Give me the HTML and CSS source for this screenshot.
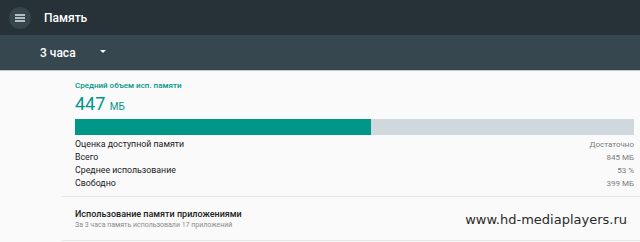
FILE: index.html
```html
<!DOCTYPE html>
<html lang="ru">
<head>
    <meta charset="UTF-8">
    <title>Память</title>
    <link rel="stylesheet" href="styles.css">
</head>
<body>
    <div class="toolbar">
        <div class="menu-btn">
            <svg width="10" height="8" viewBox="0 0 10 8"><path d="M0 1h10M0 4h10M0 7h10" stroke="#e0e4e6" stroke-width="1.4"/></svg>
        </div>
        <div class="title">Память</div>
    </div>
    <div class="subbar">
        <div class="period">3 часа</div>
        <svg class="arrow" width="6" height="3" viewBox="0 0 6 3"><path d="M0 0h6L3 3z" fill="#fff"/></svg>
    </div>
    <div class="content">
        <div class="summary">
            <div class="caption">Средний объем исп. памяти</div>
            <div class="big">447 <span class="unit">МБ</span></div>
            <div class="bar"><div class="bar-fill" style="width: 53%"></div></div>
            <div class="stats">
                <div class="row"><span>Оценка доступной памяти</span><span class="val">Достаточно</span></div>
                <div class="row"><span>Всего</span><span class="val">845 МБ</span></div>
                <div class="row"><span>Среднее использование</span><span class="val">53 %</span></div>
                <div class="row"><span>Свободно</span><span class="val">399 МБ</span></div>
            </div>
        </div>
        <div class="apps">
            <div class="apps-text">
                <div class="apps-title">Использование памяти приложениями</div>
                <div class="apps-sub">За 3 часа память использовали 17 приложений</div>
            </div>
            <div class="watermark">www.hd-mediaplayers.ru</div>
        </div>
    </div>
</body>
</html>
```

FILE: styles.css
```css
body {
    margin: 0;
    font-family: Roboto, "Noto Sans", sans-serif;
    background: #fafafa;
    overflow: hidden;
}
.toolbar {
    height: 35px;
    background: #263238;
    display: flex;
    align-items: center;
    padding-left: 9px;
}
.menu-btn {
    width: 22px;
    height: 22px;
    border-radius: 50%;
    background: #37454c;
    display: flex;
    align-items: center;
    justify-content: center;
}
.title {
    color: #fff;
    font-size: 12px;
    font-weight: 500;
    margin-left: 13px;
}
.subbar {
    height: 35px;
    background: #37474f;
    display: flex;
    align-items: center;
    padding-left: 40px;
    border-bottom: 1px solid #c5cacc;
}
.period {
    color: #fff;
    font-size: 12px;
    font-weight: 500;
    width: 60px;
}
.arrow {
    margin-top: -2px;
}
.content {
    padding-left: 62px;
}
.summary {
    padding: 10px 6px 6px 13px;
    border-bottom: 1px solid #e6e6e6;
}
.caption {
    color: #009688;
    font-size: 8px;
    font-weight: 500;
}
.big {
    color: #009688;
    font-size: 18px;
    line-height: 22px;
    margin-top: 3px;
}
.unit {
    font-size: 10px;
}
.bar {
    height: 16px;
    background: #cfd8dc;
    margin-top: 1px;
}
.bar-fill {
    height: 100%;
    background: #009688;
}
.stats {
    margin-top: 3px;
}
.row {
    display: flex;
    justify-content: space-between;
    font-size: 8.8px;
    line-height: 13px;
    color: #212121;
}
.val {
    color: #7a7a7a;
    font-size: 8px;
}
.apps {
    display: flex;
    align-items: center;
    justify-content: space-between;
    padding: 12px 13px 11px 13px;
    border-bottom: 1px solid #e6e6e6;
}
.apps-title {
    font-size: 9px;
    font-weight: 500;
    color: #212121;
}
.apps-sub {
    font-size: 7px;
    color: #8a8a8a;
    margin-top: 2px;
}
.watermark {
    font-family: "DejaVu Sans", sans-serif;
    font-size: 13px;
    color: #2a2a2a;
}
```
